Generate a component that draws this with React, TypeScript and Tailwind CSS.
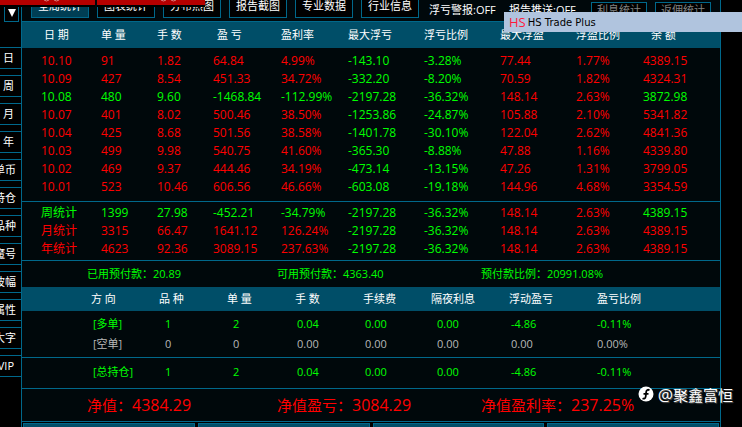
import React from 'react';

const G = 'text-[#00ff00]';
const R = 'text-[#ff0000]';

const sideItems = ['日', '周', '月', '年', '单币', '持仓', '品种', '魔号', '波幅', '属性', '大字', 'VIP'];

const statCols = [
  { label: '日 期', col: 'w-[79px]', head: 'pl-[22px]', cell: 'pl-[19px]' },
  { label: '单 量', col: 'w-[56px]', head: '', cell: '' },
  { label: '手 数', col: 'w-[56px]', head: '', cell: '' },
  { label: '盈 亏', col: 'w-[68px]', head: 'pl-1', cell: '' },
  { label: '盈利率', col: 'w-[67px]', head: '', cell: '' },
  { label: '最大浮亏', col: 'w-[76px]', head: '', cell: '' },
  { label: '浮亏比例', col: 'w-[76px]', head: '', cell: '' },
  { label: '最大浮盈', col: 'w-[76px]', head: '', cell: '' },
  { label: '浮盈比例', col: 'w-[67px]', head: '', cell: '' },
  { label: '余 额', col: 'w-[77px]', head: 'pl-2', cell: '' },
];

const daily = [
  ['10.10', '91', '1.82', '64.84', '4.99%', '-143.10', '-3.28%', '77.44', '1.77%', '4389.15'],
  ['10.09', '427', '8.54', '451.33', '34.72%', '-332.20', '-8.20%', '70.59', '1.82%', '4324.31'],
  ['10.08', '480', '9.60', '-1468.84', '-112.99%', '-2197.28', '-36.32%', '148.14', '2.63%', '3872.98'],
  ['10.07', '401', '8.02', '500.46', '38.50%', '-1253.86', '-24.87%', '105.88', '2.10%', '5341.82'],
  ['10.04', '425', '8.68', '501.56', '38.58%', '-1401.78', '-30.10%', '122.04', '2.62%', '4841.36'],
  ['10.03', '499', '9.98', '540.75', '41.60%', '-365.30', '-8.88%', '47.88', '1.16%', '4339.80'],
  ['10.02', '469', '9.37', '444.46', '34.19%', '-473.14', '-13.15%', '47.26', '1.31%', '3799.05'],
  ['10.01', '523', '10.46', '606.56', '46.66%', '-603.08', '-19.18%', '144.96', '4.68%', '3354.59'],
];

const totals = [
  ['周统计', '1399', '27.98', '-452.21', '-34.79%', '-2197.28', '-36.32%', '148.14', '2.63%', '4389.15'],
  ['月统计', '3315', '66.47', '1641.12', '126.24%', '-2197.28', '-36.32%', '148.14', '2.63%', '4389.15'],
  ['年统计', '4623', '92.36', '3089.15', '237.63%', '-2197.28', '-36.32%', '148.14', '2.63%', '4389.15'],
];

const posCols = [
  { label: '方 向', col: 'w-[137px]', head: 'pl-[69px]', cell: 'pl-[71px]' },
  { label: '品 种', col: 'w-[68px]', head: '', cell: 'pl-[6px]' },
  { label: '单 量', col: 'w-[68px]', head: '', cell: 'pl-[6px]' },
  { label: '手 数', col: 'w-[68px]', head: '', cell: 'pl-[2px]' },
  { label: '手续费', col: 'w-[68px]', head: '', cell: 'pl-[2px]' },
  { label: '隔夜利息', col: 'w-[78px]', head: '', cell: 'pl-[6px]' },
  { label: '浮动盈亏', col: 'w-[88px]', head: '', cell: 'pl-[2px]' },
  { label: '盈亏比例', col: 'w-[123px]', head: '', cell: '' },
];

function StatRow({ row }: { row: string[] }) {
  const loss = row[3].startsWith('-');
  return (
    <tr>
      {row.map((v, i) => {
        const green = i === 5 || i === 6 || (loss && i !== 7 && i !== 8);
        return (
          <td key={i} className={`${statCols[i].cell} ${green ? G : R}`}>
            {v}
          </td>
        );
      })}
    </tr>
  );
}

function PosRow({ row, color }: { row: string[]; color: string }) {
  return (
    <tr className={color}>
      {row.map((v, i) => (
        <td key={i} className={posCols[i].cell}>
          {v}
        </td>
      ))}
    </tr>
  );
}

function Toolbar() {
  return (
    <div className="flex h-[21px] items-end gap-2 overflow-hidden whitespace-nowrap pb-[3px] pl-[9px] text-[11px] text-white">
      {['全局统计', '图表统计', '分布热图', '报告截图', '专业数据', '行业信息'].map((t, i) => (
        <button
          key={t}
          className={`h-6 w-[58px] shrink-0 border border-[#00688b] ${i === 0 ? 'bg-[#003e54]' : 'bg-black'}`}
        >
          {t}
        </button>
      ))}
      <span className="ml-[2px] w-[72px] shrink-0 leading-4">浮亏警报:OFF</span>
      <span className="w-[74px] shrink-0 leading-4">报告推送:OFF</span>
      {['利息统计', '返佣统计'].map((t) => (
        <button key={t} className="h-4 w-[56px] shrink-0 border border-[#00688b] bg-black leading-[14px] text-[#808080]">
          {t}
        </button>
      ))}
    </div>
  );
}

export default function App() {
  return (
    <div className="relative flex h-screen overflow-hidden bg-black font-['Open_Sans','Noto_Sans_CJK_SC',sans-serif]">
      <nav className="flex w-[21px] shrink-0 flex-col gap-[6px] text-[11px] text-white">
        <button
          aria-label="展开"
          className="mb-[19px] ml-1 flex h-[22px] w-[15px] shrink-0 items-center justify-center border border-[#00688b] pt-1"
        >
          <svg viewBox="0 0 8 8" className="h-2 w-2 shrink-0 fill-white">
            <path d="M0 0h8L4 8z" />
          </svg>
        </button>
        {sideItems.map((t) => (
          <button
            key={t}
            className={`flex h-[22px] shrink-0 items-center justify-end overflow-hidden whitespace-nowrap border-y border-[#00688b] ${
              t.length === 2 ? 'pr-[5px]' : 'pr-[7px]'
            }`}
          >
            {t}
          </button>
        ))}
      </nav>

      <main className="mr-[21px] flex min-w-0 flex-1 flex-col border-x border-[#00688b] bg-[#00080b]">
        <Toolbar />

        <table className="w-full shrink-0 table-fixed border-separate border-spacing-0 whitespace-nowrap text-left text-[12px] leading-[18px]">
          <colgroup>
            {statCols.map((c) => (
              <col key={c.label} className={c.col} />
            ))}
          </colgroup>
          <thead>
            <tr className="h-[27px] bg-[#004e68] text-[11px] text-white">
              {statCols.map((c) => (
                <th key={c.label} className={`border-t border-[#00688b] font-normal ${c.head}`}>
                  {c.label}
                </th>
              ))}
            </tr>
          </thead>
          <tbody className="[&>tr:first-child>td]:pt-1 [&>tr:last-child>td]:pb-[5px]">
            {daily.map((r) => (
              <StatRow key={r[0]} row={r} />
            ))}
          </tbody>
          <tbody className="[&>tr:first-child>td]:border-t [&>tr:first-child>td]:border-[#00688b] [&>tr:first-child>td]:pt-[2px] [&>tr:last-child>td]:pb-[2px]">
            {totals.map((r) => (
              <StatRow key={r[0]} row={r} />
            ))}
          </tbody>
        </table>

        <div className="grid h-[27px] shrink-0 grid-cols-[190fr_204fr_239fr] items-center whitespace-nowrap border-t border-[#00688b] pl-[65px] text-[11px] text-[#00ff00]">
          <span>已用预付款：20.89</span>
          <span>可用预付款：4363.40</span>
          <span>预付款比例：20991.08%</span>
        </div>

        <table className="w-full shrink-0 table-fixed border-separate border-spacing-0 whitespace-nowrap text-left text-[11px] leading-5">
          <colgroup>
            {posCols.map((c) => (
              <col key={c.label} className={c.col} />
            ))}
          </colgroup>
          <thead>
            <tr className="h-6 bg-[#004e68] text-white">
              {posCols.map((c) => (
                <th key={c.label} className={`font-normal ${c.head}`}>
                  {c.label}
                </th>
              ))}
            </tr>
          </thead>
          <tbody className="[&>tr:first-child>td]:pt-[3px] [&>tr:last-child>td]:pb-[3px]">
            <PosRow color={G} row={['[多单]', '1', '2', '0.04', '0.00', '0.00', '-4.86', '-0.11%']} />
            <PosRow color="text-[#b8b8b8]" row={['[空单]', '0', '0', '0.00', '0.00', '0.00', '0.00', '0.00%']} />
          </tbody>
          <tbody className="[&>tr>td]:border-t [&>tr>td]:border-[#00688b] [&>tr>td]:pb-[6px] [&>tr>td]:pt-1">
            <PosRow color={G} row={['[总持仓]', '1', '2', '0.04', '0.00', '0.00', '-4.86', '-0.11%']} />
          </tbody>
        </table>

        <div className="grid h-[33px] shrink-0 grid-cols-[190fr_204fr_239fr] items-center whitespace-nowrap border-t border-[#00688b] pl-[65px] text-[15px] text-[#ff0000]">
          <span>净值：<span className="text-base">4384.29</span></span>
          <span>净值盈亏：<span className="text-base">3084.29</span></span>
          <span>净值盈利率：<span className="text-base">237.25%</span></span>
        </div>

        <div className="grid min-h-0 flex-1 grid-cols-4 gap-[3px] overflow-hidden border-t border-[#00688b] bg-black px-px pt-px">
          {['面板一', '面板二', '面板三', '面板四'].map((t) => (
            <button key={t} aria-label={t} className="h-6 border border-[#00688b] bg-[#004e68]" />
          ))}
        </div>
      </main>

      <div className="absolute left-0 top-0 flex h-[7px] gap-[2px]">
        <div className="flex w-[95px] justify-center border-b-2 border-black bg-[#b60000] pl-2">
          <svg viewBox="0 0 16 2" className="h-[2px] w-4 fill-none stroke-[#d98080]">
            <path d="M0 0q2.500 2 5 0M10 0q2.500 2 5 0" />
          </svg>
        </div>
        <div className="flex w-[108px] justify-center border-b-2 border-black bg-[#b60000] pl-9">
          <svg viewBox="0 0 16 2" className="h-[2px] w-4 fill-none stroke-[#d98080]">
            <path d="M0 0q2.500 2 5 0M10 0q2.500 2 5 0" />
          </svg>
        </div>
      </div>

      <div className="absolute left-[504px] right-0 top-3 flex h-5 items-center gap-[2px] whitespace-nowrap bg-[#b0c4de] pl-[5px] pt-px">
        <span className="font-['Open_Sans',sans-serif] text-[13px] text-[#ff1a3c]">HS</span>
        <span className="font-['DejaVu_Sans',sans-serif] text-[10px] text-black">HS Trade Plus</span>
      </div>

      <div className="absolute bottom-5 right-[9px] flex items-center gap-1 whitespace-nowrap text-[15px] text-white [text-shadow:1px_1px_1px_#555]">
        <svg viewBox="0 0 16 16" className="h-4 w-4">
          <circle cx="8" cy="8" r="7.500" fill="#fff" />
          <path d="M11.500 4.200C9.800 3.200 8.400 4 8.200 5.800L7.700 10.500C7.500 12.500 6 13.200 4.600 12.200M5.500 7.800h5" fill="none" stroke="#000" strokeWidth="1.800" />
        </svg>
        <span><span className="text-[17px]">@</span>聚鑫富恒</span>
      </div>
    </div>
  );
}
